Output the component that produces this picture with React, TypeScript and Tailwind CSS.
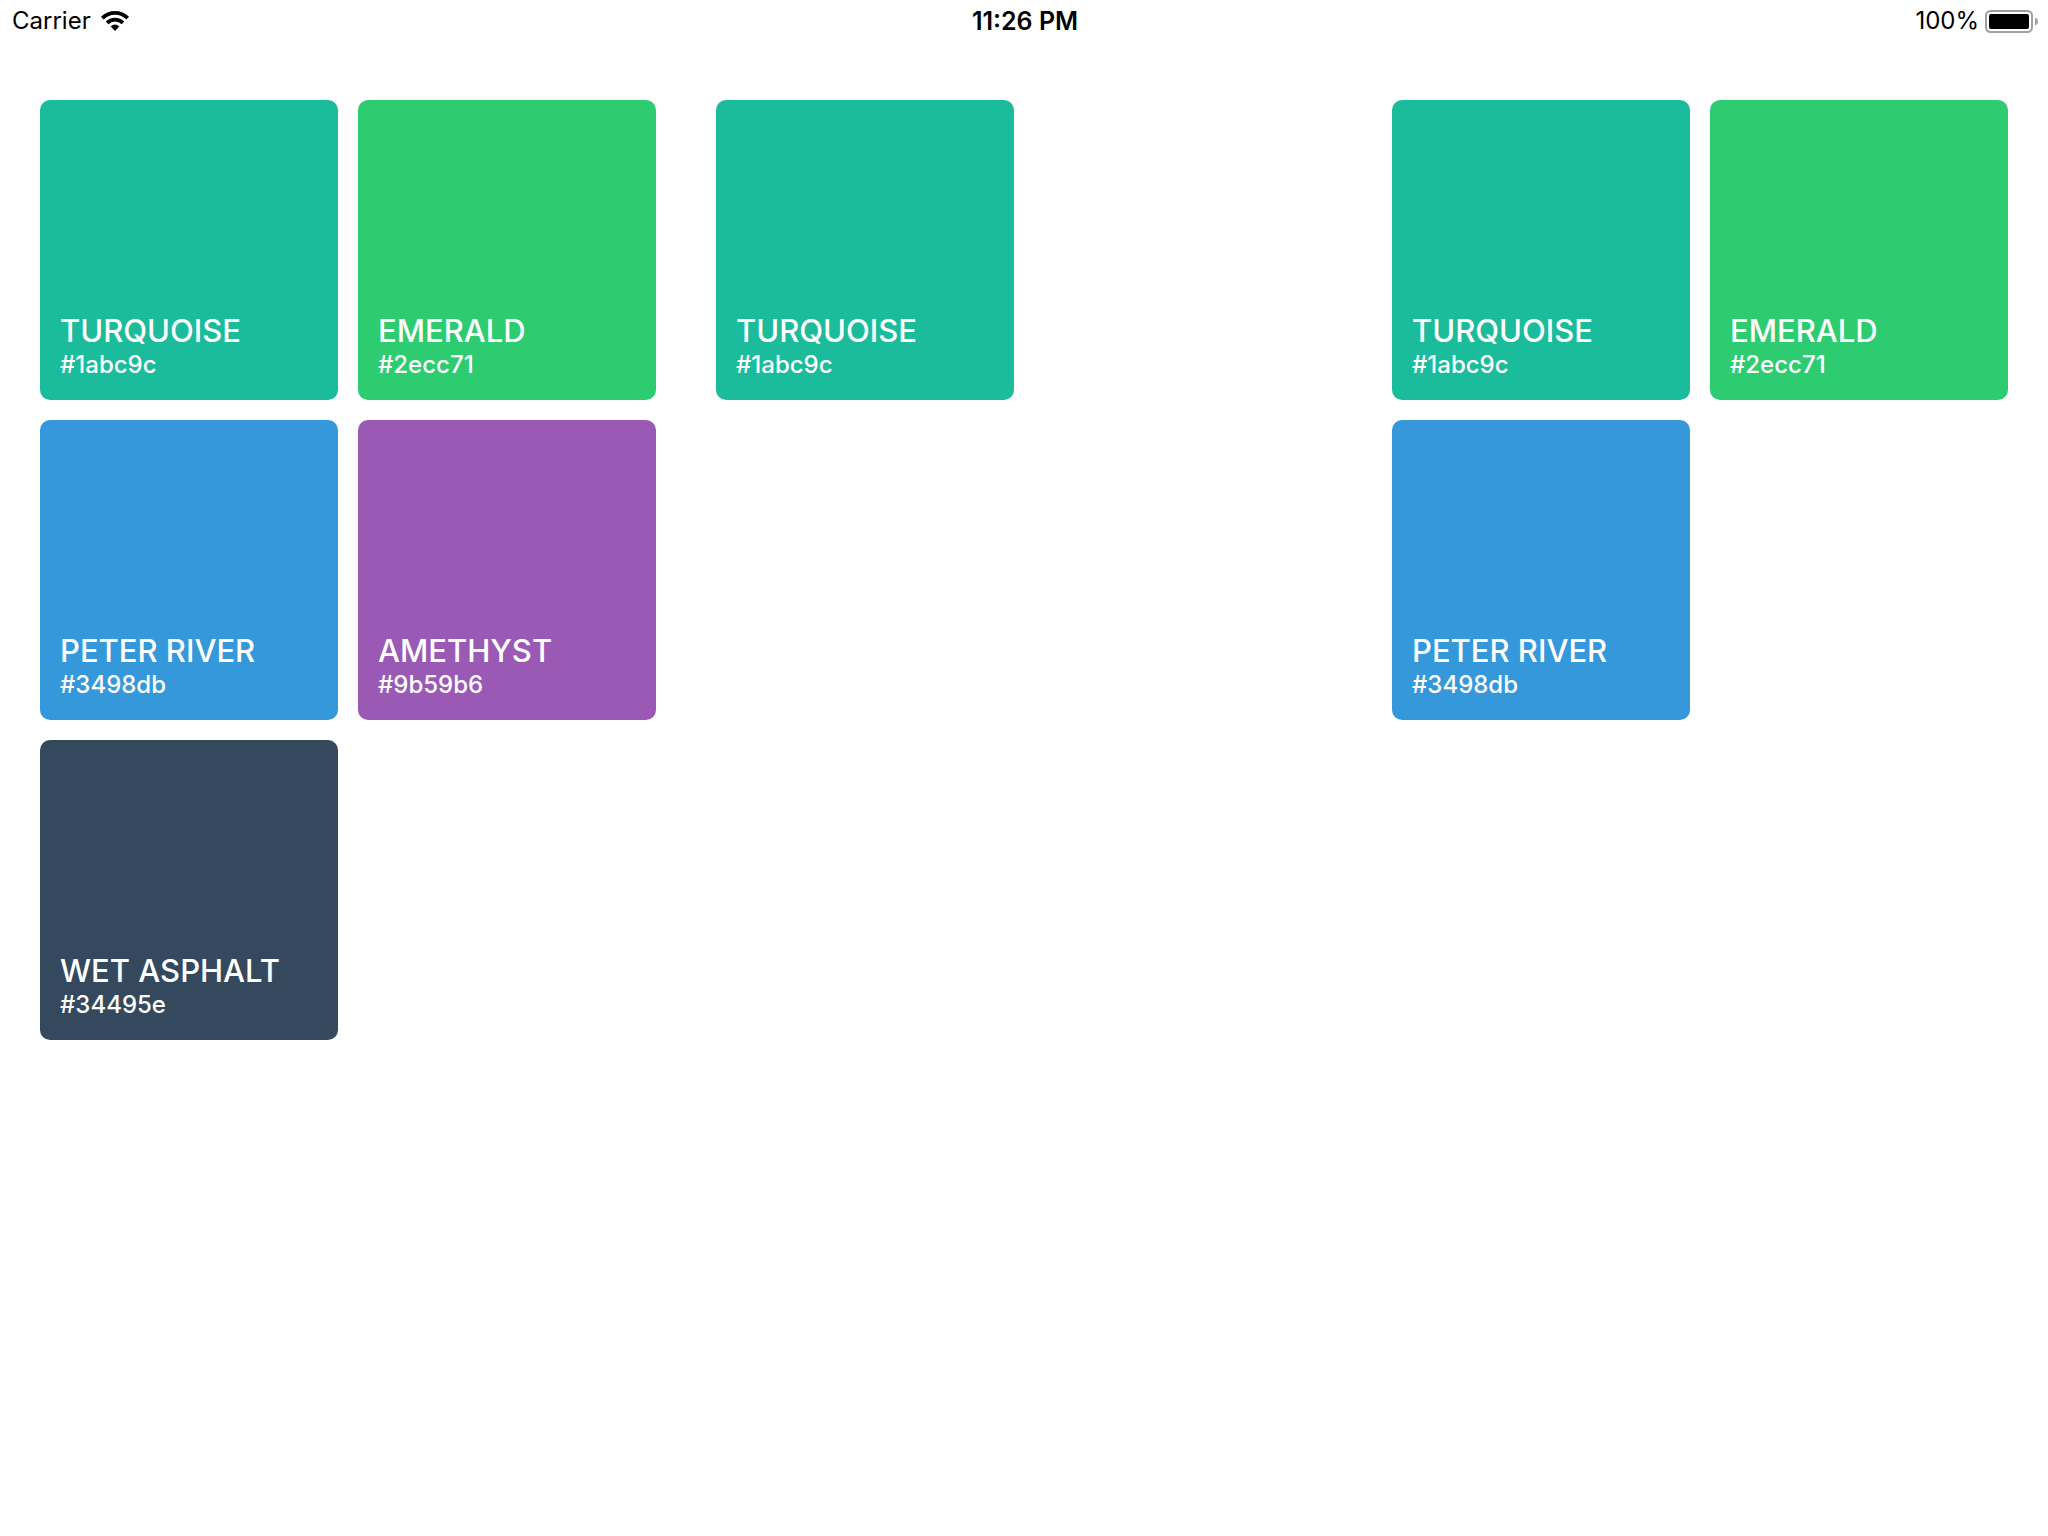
type Swatch = { name: string; hex: string; color: string };

const TURQUOISE: Swatch = { name: "TURQUOISE", hex: "#1abc9c", color: "bg-[#1abc9c]" };
const EMERALD: Swatch = { name: "EMERALD", hex: "#2ecc71", color: "bg-[#2ecc71]" };
const PETER_RIVER: Swatch = { name: "PETER RIVER", hex: "#3498db", color: "bg-[#3498db]" };
const AMETHYST: Swatch = { name: "AMETHYST", hex: "#9b59b6", color: "bg-[#9b59b6]" };
const WET_ASPHALT: Swatch = { name: "WET ASPHALT", hex: "#34495e", color: "bg-[#34495e]" };

const GROUPS: Swatch[][] = [
  [TURQUOISE, EMERALD, PETER_RIVER, AMETHYST, WET_ASPHALT],
  [TURQUOISE],
  [TURQUOISE, EMERALD, PETER_RIVER],
];

function WifiIcon() {
  return (
    <svg viewBox="0 0 28 20" className="h-5 w-7" fill="none" stroke="black" strokeWidth="3.7" aria-label="Wi-Fi">
      <path d="M1.3 7.1a18 18 0 0 1 25.4 0" />
      <path d="M6 11.9a11.4 11.4 0 0 1 16 0" />
      <path d="M14 20l-4.300-4.600a6 6 0 0 1 8.600 0z" fill="black" stroke="none" />
    </svg>
  );
}

function BatteryIcon() {
  return (
    <svg viewBox="0 0 53 23" className="h-[23px] w-[53px]" fill="none" aria-label="Battery full">
      <rect x="1" y="1" width="46" height="21" rx="4.5" stroke="#a0a0a0" strokeWidth="2" />
      <rect x="4" y="4" width="40" height="15" rx="2" fill="black" />
      <path d="M50 7.5c1.8.7 3 2.2 3 4s-1.2 3.300-3 4z" fill="#a0a0a0" />
    </svg>
  );
}

function StatusBar() {
  return (
    <header className="grid h-[42px] grid-cols-3 items-center pr-2.5 pl-3 text-2xl leading-[42px] text-black">
      <div className="flex items-center gap-2.5">
        <span>Carrier</span>
        <WifiIcon />
      </div>
      <time className="text-center text-[25px] font-semibold">11:26 PM</time>
      <div className="flex items-center justify-end gap-1.5">
        <span>100%</span>
        <BatteryIcon />
      </div>
    </header>
  );
}

function Card({ swatch }: { swatch: Swatch }) {
  return (
    <li className={`flex h-[300px] flex-col justify-end rounded-[10px] p-5 text-white ${swatch.color}`}>
      <h2 className="text-[31px] leading-[38px] font-medium">{swatch.name}</h2>
      <p className="text-2xl leading-[30px] font-medium">{swatch.hex}</p>
    </li>
  );
}

export default function App() {
  return (
    <div className="min-h-screen bg-white font-['Inter',sans-serif]">
      <StatusBar />
      <main className="grid grid-cols-3 items-start gap-[60px] px-10 pt-[58px]">
        {GROUPS.map((group, index) => (
          <ul key={index} className="grid grid-cols-2 gap-5">
            {group.map((swatch) => (
              <Card key={swatch.name} swatch={swatch} />
            ))}
          </ul>
        ))}
      </main>
    </div>
  );
}
